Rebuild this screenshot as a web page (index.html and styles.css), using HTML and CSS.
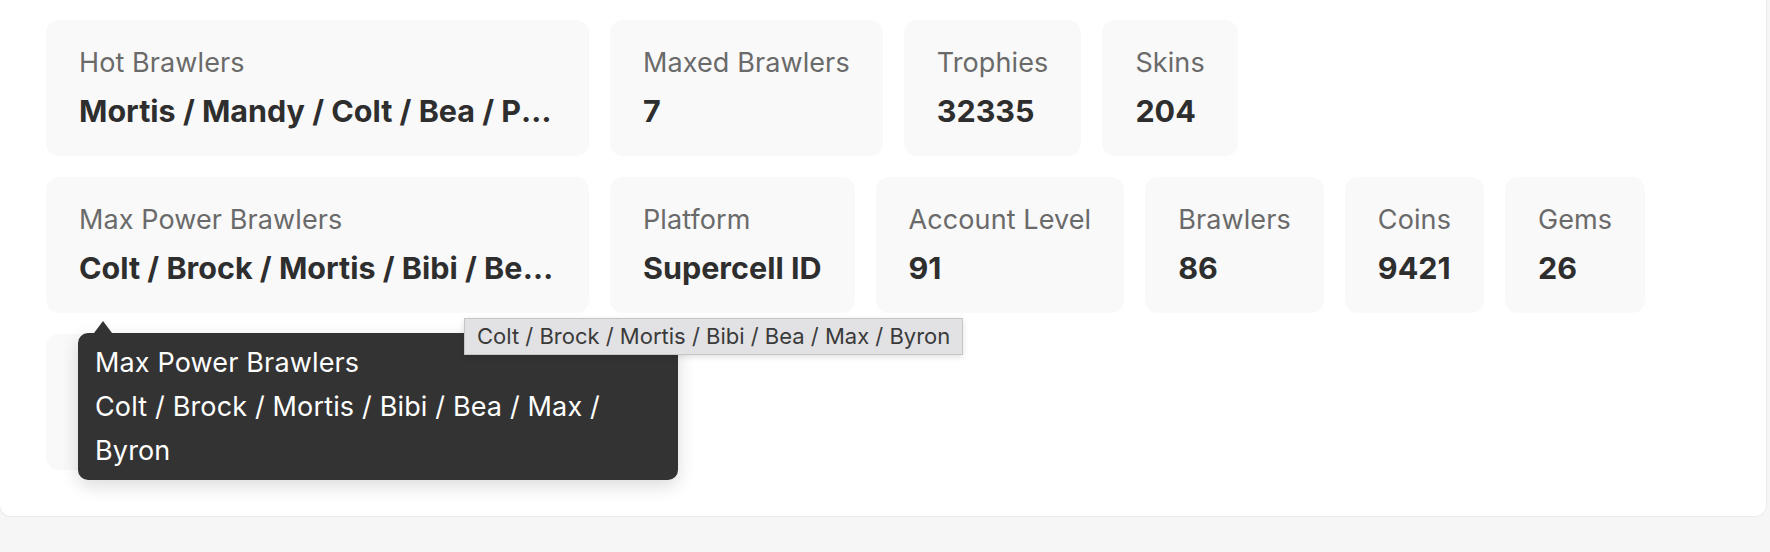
FILE: index.html
```html
<!DOCTYPE html>
<html lang="en">
<head>
<meta charset="utf-8">
<title>Account stats</title>
<link rel="stylesheet" href="styles.css">
</head>
<body>
<div class="panel">
  <div class="stats">
    <div class="row">
      <div class="card">
        <div class="label">Hot Brawlers</div>
        <div class="value">Mortis / Mandy / Colt / Bea / Piper / Spike / Leon</div>
      </div>
      <div class="card">
        <div class="label">Maxed Brawlers</div>
        <div class="value">7</div>
      </div>
      <div class="card">
        <div class="label">Trophies</div>
        <div class="value">32335</div>
      </div>
      <div class="card">
        <div class="label">Skins</div>
        <div class="value">204</div>
      </div>
    </div>
    <div class="row">
      <div class="card card-hovered">
        <div class="label">Max Power Brawlers</div>
        <div class="value">Colt / Brock / Mortis / Bibi / Bea / Max / Byron</div>
        <div class="tip">
          <div class="tip-title">Max Power Brawlers</div>
          <div class="tip-text">Colt / Brock / Mortis / Bibi / Bea / Max / Byron</div>
        </div>
        <div class="native-tip">Colt / Brock / Mortis / Bibi / Bea / Max / Byron</div>
      </div>
      <div class="card">
        <div class="label">Platform</div>
        <div class="value">Supercell ID</div>
      </div>
      <div class="card">
        <div class="label">Account Level</div>
        <div class="value">91</div>
      </div>
      <div class="card">
        <div class="label">Brawlers</div>
        <div class="value">86</div>
      </div>
      <div class="card">
        <div class="label">Coins</div>
        <div class="value">9421</div>
      </div>
      <div class="card">
        <div class="label">Gems</div>
        <div class="value">26</div>
      </div>
    </div>
    <div class="row">
      <div class="card">
        <div class="label">Power League</div>
        <div class="value">Gold</div>
      </div>
    </div>
  </div>
</div>
</body>
</html>
```
FILE: styles.css
```css
* {
  box-sizing: border-box;
}

html, body {
  margin: 0;
  padding: 0;
}

body {
  background: #f6f6f6;
  font-family: Inter, "Noto Sans", "Liberation Sans", sans-serif;
  color: #333;
  height: 552px;
  overflow: hidden;
}

.panel {
  background: #ffffff;
  border: 1px solid #ebebeb;
  border-top: none;
  border-radius: 0 0 12px 12px;
  margin: 0 3px 0 -1px;
  padding: 20px 0 46px 46px;
}

.stats {
  display: flex;
  flex-direction: column;
  gap: 21px;
}

.row {
  display: flex;
  gap: 21px;
  align-items: flex-start;
}

.card {
  display: flex;
  flex-direction: column;
  background: #f9f9f9;
  border-radius: 13px;
  padding: 24px 33px;
  max-width: 543px;
  min-width: 0;
  height: 136px;
}

.card-hovered {
  position: relative;
}

.label {
  font-size: 27px;
  line-height: 37px;
  letter-spacing: 0.1px;
  color: #6a6a6a;
  white-space: nowrap;
}

.value {
  margin-top: 8px;
  font-size: 30.5px;
  line-height: 43px;
  font-weight: 700;
  color: #2e2e2e;
  white-space: nowrap;
  overflow: hidden;
  text-overflow: ellipsis;
}

.tip {
  position: absolute;
  left: 32px;
  top: calc(100% + 20px);
  width: 600px;
  padding: 8px 17px 7px;
  background: #333333;
  color: #ffffff;
  border-radius: 10px;
  font-size: 27px;
  line-height: 44px;
  letter-spacing: 0.15px;
  box-shadow: 0 6px 18px rgba(0, 0, 0, 0.14);
  z-index: 10;
}

.tip::before {
  content: "";
  position: absolute;
  left: 16px;
  top: -12px;
  border-left: 9px solid transparent;
  border-right: 9px solid transparent;
  border-bottom: 12px solid #333333;
}

.native-tip {
  position: absolute;
  left: 418px;
  top: calc(100% + 5px);
  padding: 4px 12px;
  background: #e2e2e4;
  border: 1px solid #c5c5c7;
  color: #3a3a3a;
  font-size: 22px;
  line-height: 27px;
  white-space: nowrap;
  box-shadow: 0 2px 6px rgba(0, 0, 0, 0.12);
  z-index: 11;
}
```
